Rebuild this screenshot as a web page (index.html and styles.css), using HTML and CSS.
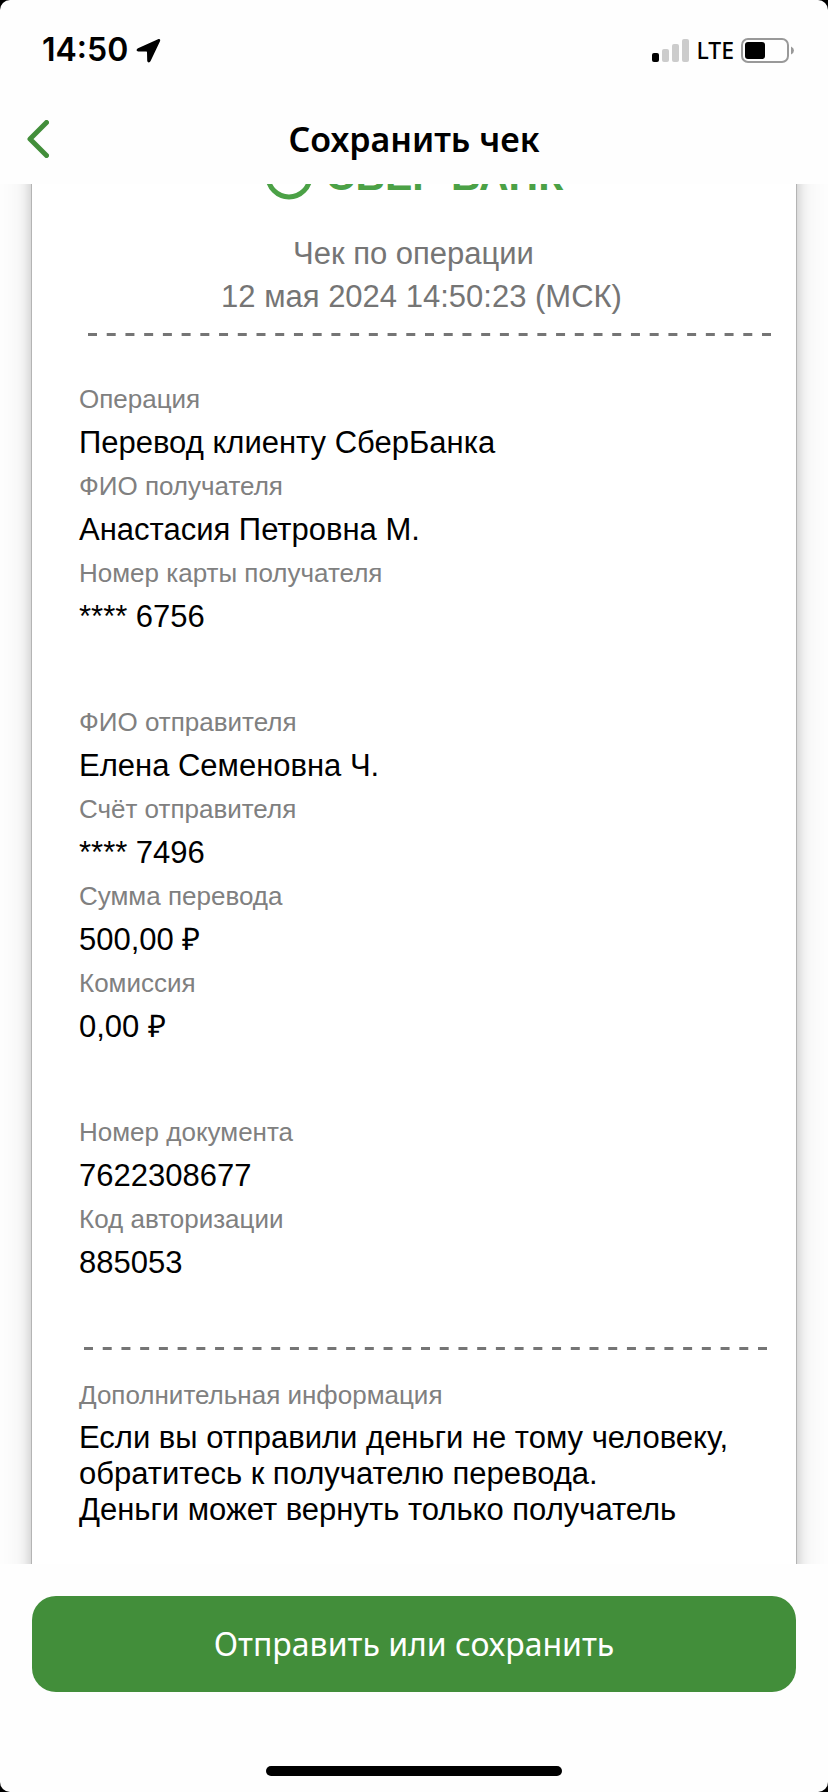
FILE: index.html
```html
<!DOCTYPE html>
<html lang="ru">

<head>
    <meta charset="UTF-8">
    <meta name="viewport" content="width=device-width, initial-scale=1.0">
    <title>Сохранить чек</title>
    <link rel="stylesheet" href="styles.css">
</head>

<body>
    <div class="screen">
        <header class="status-bar">
            <div class="status-left">
                <span class="time">14:50</span>
                <svg class="location" viewBox="0 0 25 25" aria-hidden="true">
                    <path d="M22 1.200 2 10.200C0 11.200 0.300 13.300 2.300 13.400L10.400 13.600Q11 13.600 11 14.200L11.200 22.500C11.300 24.800 13.700 25 14.600 23.100L24 3.200C24.700 1.500 23.800 0.400 22 1.200Z" />
                </svg>
            </div>
            <div class="status-right">
                <svg class="signal" viewBox="0 0 37 23" aria-hidden="true">
                    <rect x="0" y="14" width="7" height="9" rx="2" />
                    <rect class="off" x="10" y="10" width="7" height="13" rx="2" />
                    <rect class="off" x="20" y="5" width="7" height="18" rx="2" />
                    <rect class="off" x="30" y="0" width="7" height="23" rx="2" />
                </svg>
                <span class="network">LTE</span>
                <svg class="battery" viewBox="0 0 53 25" aria-hidden="true">
                    <rect class="case" x="1" y="1" width="46" height="23" rx="6" />
                    <rect x="4" y="4" width="20" height="17" rx="3" />
                    <path class="cap" d="M50 8.500Q53 10 53 12.500Q53 15 50 16.500Z" />
                </svg>
            </div>
        </header>

        <nav class="nav-bar">
            <button class="back" type="button" aria-label="Назад">
                <svg viewBox="0 0 22 38" aria-hidden="true">
                    <path d="M19.500 2.500 3 19 19.500 35.500" />
                </svg>
            </button>
            <h1 class="title">Сохранить чек</h1>
        </nav>

        <main class="viewer">
            <article class="receipt">
                <div class="logo">
                    <svg class="logo-mark" viewBox="0 0 48 48" aria-hidden="true">
                        <circle cx="24" cy="24" r="21" />
                    </svg>
                    <span class="logo-text">СБЕР БАНК</span>
                </div>

                <div class="heading">
                    <p class="heading-title">Чек по операции</p>
                    <p class="heading-date">12 мая 2024 14:50:23 (МСК)</p>
                </div>
                <svg class="divider divider-top" viewBox="0 0 912 3" preserveAspectRatio="none" aria-hidden="true">
                    <path d="M0 1.500H912" />
                </svg>

                <dl class="group">
                    <dt>Операция</dt>
                    <dd>Перевод клиенту СберБанка</dd>
                    <dt>ФИО получателя</dt>
                    <dd>Анастасия Петровна М.</dd>
                    <dt>Номер карты получателя</dt>
                    <dd>**** 6756</dd>
                </dl>

                <dl class="group">
                    <dt>ФИО отправителя</dt>
                    <dd>Елена Семеновна Ч.</dd>
                    <dt>Счёт отправителя</dt>
                    <dd>**** 7496</dd>
                    <dt>Сумма перевода</dt>
                    <dd>500,00 ₽</dd>
                    <dt>Комиссия</dt>
                    <dd>0,00 ₽</dd>
                </dl>

                <dl class="group">
                    <dt>Номер документа</dt>
                    <dd>7622308677</dd>
                    <dt>Код авторизации</dt>
                    <dd>885053</dd>
                </dl>

                <svg class="divider" viewBox="0 0 912 3" preserveAspectRatio="none" aria-hidden="true">
                    <path d="M0 1.500H912" />
                </svg>

                <dl class="info">
                    <dt>Дополнительная информация</dt>
                    <dd>Если вы отправили деньги не тому человеку,<br>обратитесь к получателю перевода.<br>Деньги может вернуть только получатель</dd>
                </dl>
            </article>
        </main>

        <footer class="actions">
            <button class="save" type="button">Отправить или сохранить</button>
            <div class="home-indicator"></div>
        </footer>
    </div>
</body>

</html>
```
FILE: styles.css
```css
* {
    box-sizing: border-box;
}

body {
    margin: 0;
    background-color: #000000;
    font-family: "Liberation Sans", Arial, sans-serif;
    color: #000000;
}

.screen {
    height: 100vh;
    display: flex;
    flex-direction: column;
    overflow: hidden;
    border-radius: 10px;
    background-color: #fefefe;
}

/* status bar */
.status-bar {
    display: flex;
    justify-content: space-between;
    align-items: center;
    height: 100px;
    padding: 0 34px 0 42px;
}

.status-left {
    display: flex;
    align-items: center;
    gap: 8px;
}

.time {
    font: 600 32px/40px Inter, sans-serif;
}

.location {
    width: 25px;
    height: 25px;
}

.status-right {
    display: flex;
    align-items: center;
    gap: 7px;
}

.signal {
    width: 37px;
    height: 23px;
}

.signal .off {
    fill: #cccccc;
}

.network {
    font: 500 23px/28px "Noto Sans", sans-serif;
}

.battery {
    width: 53px;
    height: 25px;
}

.battery .case {
    fill: none;
    stroke: #999999;
    stroke-width: 2;
}

.battery .cap {
    fill: #999999;
}

/* navigation */
.nav-bar {
    display: grid;
    grid-template-columns: 60px 1fr 60px;
    align-items: center;
    height: 84px;
    padding-bottom: 6px;
}

.back {
    display: flex;
    padding: 0 0 0 27px;
    border: none;
    background: none;
}

.back svg {
    width: 22px;
    height: 38px;
    fill: none;
    stroke: #428e3a;
    stroke-width: 5;
    stroke-linecap: round;
    stroke-linejoin: round;
}

.title {
    margin: 0;
    text-align: center;
    font: 600 34px/44px "Noto Sans", sans-serif;
}

/* receipt */
.viewer {
    flex: 1;
    min-height: 0;
    overflow: hidden;
    padding: 0 31px;
}

.receipt {
    height: 150%;
    margin-top: -48px;
    padding: 15px 24px 0 47px;
    border: 1px solid #b4b4b4;
    background-color: #ffffff;
    box-shadow: 0 0 36px rgba(0, 0, 0, 0.1), 0 0 12px rgba(0, 0, 0, 0.2);
}

.logo {
    display: flex;
    justify-content: center;
    gap: 13px;
    height: 48px;
    padding-right: 23px;
}

.logo-mark {
    width: 48px;
    height: 48px;
    fill: none;
    stroke: #4ba146;
    stroke-width: 5;
}

.logo-text {
    color: #4ba146;
    font-size: 41px;
    font-weight: 700;
    line-height: 48px;
}

.heading {
    margin: 32px 0 15px;
    text-align: center;
    color: #757575;
    font-size: 31px;
    line-height: 43px;
}

.heading-title {
    margin: 0;
    padding-right: 24px;
}

.heading-date {
    margin: 0;
    padding-right: 8px;
}

.divider {
    display: block;
    width: calc(100% - 10px);
    height: 3px;
    margin-left: 5px;
    stroke: #757575;
    stroke-width: 3;
    stroke-dasharray: 12 13;
}

.divider-top {
    margin-left: 9px;
}

.group {
    margin: 42px 0 62px;
}

.group + .group {
    margin-top: 0;
}

dt {
    color: #808080;
    font-size: 26px;
    line-height: 42px;
}

dd {
    margin: 0;
    font-size: 31px;
    line-height: 45px;
}

.info {
    margin: 24px 0 0;
}

.info dd {
    padding-top: 4px;
    line-height: 36px;
}

/* bottom actions */
.actions {
    display: flex;
    flex-direction: column;
    align-items: center;
    gap: 74px;
    padding: 32px 32px 16px;
}

.save {
    width: 100%;
    height: 96px;
    border: none;
    border-radius: 24px;
    background-color: #428e3a;
    color: #ffffff;
    font: 400 32px/40px "Noto Sans", sans-serif;
}

.home-indicator {
    width: 296px;
    height: 10px;
    border-radius: 5px;
    background-color: #000000;
}
```
